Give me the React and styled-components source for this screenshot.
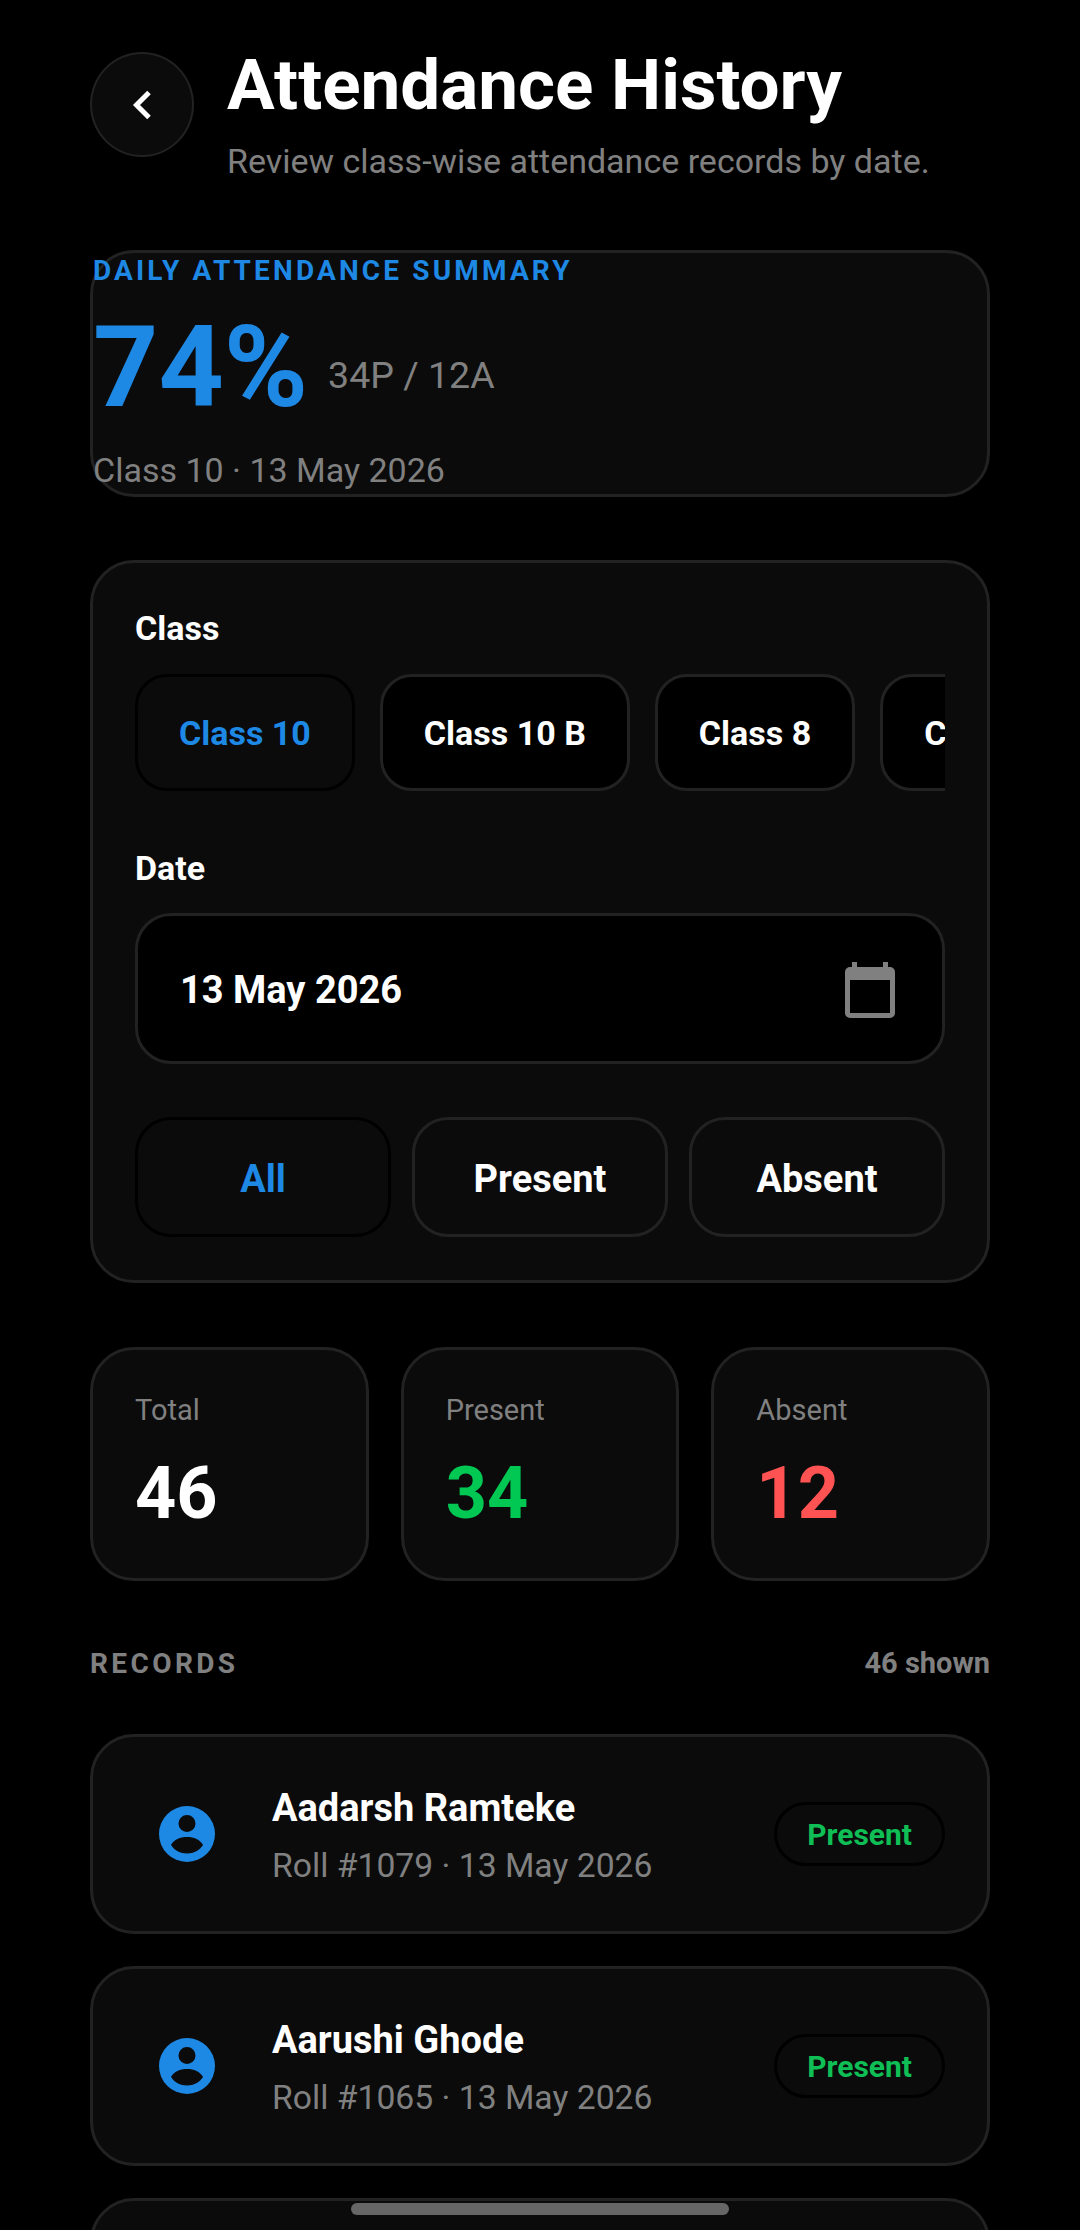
import styled, { createGlobalStyle } from 'styled-components';

const BLUE = '#1e88e5';
const GREY = '#808080';
const BORDER = '#222222';
const CARD = '#0b0b0b';

const records = [
  { name: 'Aadarsh Ramteke', roll: 1079 },
  { name: 'Aarushi Ghode', roll: 1065 },
];

const GlobalStyle = createGlobalStyle`
  html, body {
    margin: 0;
    height: 2230px;
    overflow: hidden;
    background: #000;
    font-family: Roboto, "Noto Sans", sans-serif;
    color: #fff;
  }
  * { box-sizing: border-box; }
`;

const Page = styled.div`
  position: relative;
  width: 1080px;
  height: 2230px;
  overflow: hidden;
  padding: 44px 90px 0;
`;

const Header = styled.header`
  display: flex;
  gap: 33px;
  height: 206px;
`;

const BackButton = styled.button`
  width: 104px;
  height: 105px;
  margin-top: 8px;
  padding: 0;
  border-radius: 50%;
  background: ${CARD};
  border: 2px solid ${BORDER};
  display: flex;
  align-items: center;
  justify-content: center;
`;

const HeaderText = styled.div`
  display: flex;
  flex-direction: column;
`;

const Title = styled.h1`
  margin: 0;
  font-size: 71px;
  line-height: 81px;
  font-weight: 700;
`;

const Subtitle = styled.p`
  margin: 15px 0 0;
  font-size: 34px;
  line-height: 42px;
  color: ${GREY};
`;

const Card = styled.section`
  background: ${CARD};
  border: 3px solid ${BORDER};
  border-radius: 44px;
`;

const SummaryCard = styled(Card)`
  height: 247px;
  display: flex;
  flex-direction: column;
`;

const SummaryLabel = styled.div`
  font-size: 28px;
  line-height: 35px;
  font-weight: 700;
  letter-spacing: 3.15px;
  color: ${BLUE};
`;

const SummaryRow = styled.div`
  display: flex;
  align-items: center;
  gap: 20px;
  margin-top: 19px;
`;

const Percent = styled.div`
  font-size: 114px;
  line-height: 120px;
  font-weight: 700;
  color: ${BLUE};
`;

const Counts = styled.div`
  margin-top: 16px;
  font-size: 37.5px;
  color: ${GREY};
`;

const SummaryMeta = styled.div`
  margin-top: 23px;
  font-size: 34px;
  line-height: 40px;
  color: ${GREY};
`;

const FilterCard = styled(Card)`
  margin-top: 63px;
  height: 723px;
  padding: 44px 42px 0;
`;

const FieldLabel = styled.div`
  font-size: 34px;
  line-height: 42px;
  font-weight: 700;
`;

const ChipRow = styled.div`
  display: flex;
  gap: 25px;
  margin-top: 25px;
  overflow: hidden;
`;

const Chip = styled.div`
  flex: none;
  height: 117px;
  padding: 0 41px;
  display: flex;
  align-items: center;
  border-radius: 32px;
  font-size: 34px;
  font-weight: 700;
  background: ${(p) => (p.$active ? CARD : '#000')};
  border: 3px solid ${(p) => (p.$active ? '#000' : BORDER)};
  color: ${(p) => (p.$active ? BLUE : '#fff')};
`;

const DateSection = styled.div`
  margin-top: 56px;
`;

const DateField = styled.div`
  margin-top: 24px;
  height: 151px;
  padding: 2px 47px 0 42px;
  display: flex;
  align-items: center;
  justify-content: space-between;
  background: #000;
  border: 3px solid ${BORDER};
  border-radius: 36px;
  font-size: 38px;
  font-weight: 700;
`;

const FilterRow = styled.div`
  display: grid;
  grid-template-columns: repeat(3, 1fr);
  gap: 21px;
  margin-top: 53px;
`;

const FilterButton = styled.div`
  height: 120px;
  padding-top: 3px;
  display: flex;
  align-items: center;
  justify-content: center;
  border-radius: 36px;
  font-size: 38px;
  font-weight: 700;
  background: ${CARD};
  border: 3px solid ${(p) => (p.$active ? '#000' : BORDER)};
  color: ${(p) => (p.$active ? BLUE : '#fff')};
`;

const StatRow = styled.div`
  display: grid;
  grid-template-columns: repeat(3, 1fr);
  gap: 32px;
  margin-top: 64px;
`;

const StatCard = styled(Card)`
  height: 234px;
  padding: 42px 42px 0;
`;

const StatLabel = styled.div`
  font-size: 29px;
  line-height: 36px;
  color: ${GREY};
`;

const StatValue = styled.div`
  margin-top: 26px;
  font-size: 72px;
  line-height: 80px;
  font-weight: 700;
  color: ${(p) => p.$color};
`;

const SectionHeader = styled.div`
  display: flex;
  align-items: center;
  justify-content: space-between;
  margin-top: 64px;
  height: 36px;
  color: ${GREY};
  font-weight: 700;
`;

const SectionTitle = styled.div`
  font-size: 28px;
  letter-spacing: 3.4px;
`;

const SectionCount = styled.div`
  font-size: 29px;
`;

const RecordList = styled.div`
  display: flex;
  flex-direction: column;
  gap: 32px;
  margin-top: 53px;
`;

const RecordCard = styled(Card)`
  flex: none;
  height: 200px;
  padding: 0 42px 0 66px;
  display: flex;
  align-items: center;
`;

const RecordText = styled.div`
  flex: 1;
  margin-left: 57px;
  padding-top: 3px;
`;

const RecordName = styled.div`
  font-size: 38px;
  line-height: 46px;
  font-weight: 700;
`;

const RecordMeta = styled.div`
  margin-top: 14px;
  font-size: 33.7px;
  line-height: 42px;
  color: ${GREY};
`;

const Badge = styled.div`
  height: 64px;
  padding: 0 30px;
  display: flex;
  align-items: center;
  border-radius: 32px;
  border: 3px solid #000;
  font-size: 30px;
  font-weight: 700;
  color: #0fbf55;
`;

const HomeIndicator = styled.div`
  position: absolute;
  left: 351px;
  top: 2203px;
  width: 378px;
  height: 12px;
  border-radius: 6px;
  background: #666666;
`;

function ChevronLeft() {
  return (
    <svg width="24" height="32" viewBox="0 0 24 32">
      <path d="M19 3.500 L6.500 16 L19 28.500" fill="none" stroke="#fff" strokeWidth="5" />
    </svg>
  );
}

function CalendarIcon() {
  return (
    <svg width="50" height="56" viewBox="0 0 50 56" fill={GREY}>
      <path
        fillRule="evenodd"
        d="M7 0h5v5h26V0h5v5h2a5 5 0 0 1 5 5v41a5 5 0 0 1-5 5H5a5 5 0 0 1-5-5V10a5 5 0 0 1 5-5h2zM5 18v33h40V18z"
      />
    </svg>
  );
}

function PersonIcon() {
  return (
    <svg width="56" height="56" viewBox="0 0 56 56">
      <path
        fill={BLUE}
        fillRule="evenodd"
        d="M28 0a28 28 0 1 1 0 56a28 28 0 1 1 0-56zM28 9a8.500 8.500 0 1 0 0 17a8.500 8.500 0 1 0 0-17zM28 31c-7 0-13 2.500-16 8c3 5 9.500 8.500 16 8.500s13-3.500 16-8.500c-3-5.500-9-8-16-8z"
      />
    </svg>
  );
}

export default function App() {
  return (
    <Page>
      <GlobalStyle />
      <Header>
        <BackButton>
          <ChevronLeft />
        </BackButton>
        <HeaderText>
          <Title>Attendance History</Title>
          <Subtitle>Review class-wise attendance records by date.</Subtitle>
        </HeaderText>
      </Header>

      <SummaryCard>
        <SummaryLabel>DAILY ATTENDANCE SUMMARY</SummaryLabel>
        <SummaryRow>
          <Percent>74%</Percent>
          <Counts>34P / 12A</Counts>
        </SummaryRow>
        <SummaryMeta>Class 10 · 13 May 2026</SummaryMeta>
      </SummaryCard>

      <FilterCard>
        <FieldLabel>Class</FieldLabel>
        <ChipRow>
          <Chip $active>Class 10</Chip>
          <Chip>Class 10 B</Chip>
          <Chip>Class 8</Chip>
          <Chip>Class 9</Chip>
        </ChipRow>
        <DateSection>
          <FieldLabel>Date</FieldLabel>
          <DateField>
            13 May 2026
            <CalendarIcon />
          </DateField>
        </DateSection>
        <FilterRow>
          <FilterButton $active>All</FilterButton>
          <FilterButton>Present</FilterButton>
          <FilterButton>Absent</FilterButton>
        </FilterRow>
      </FilterCard>

      <StatRow>
        <StatCard>
          <StatLabel>Total</StatLabel>
          <StatValue $color="#fff">46</StatValue>
        </StatCard>
        <StatCard>
          <StatLabel>Present</StatLabel>
          <StatValue $color="#00c853">34</StatValue>
        </StatCard>
        <StatCard>
          <StatLabel>Absent</StatLabel>
          <StatValue $color="#ff5252">12</StatValue>
        </StatCard>
      </StatRow>

      <SectionHeader>
        <SectionTitle>RECORDS</SectionTitle>
        <SectionCount>46 shown</SectionCount>
      </SectionHeader>

      <RecordList>
        {records.map((r) => (
          <RecordCard key={r.roll}>
            <PersonIcon />
            <RecordText>
              <RecordName>{r.name}</RecordName>
              <RecordMeta>Roll #{r.roll} · 13 May 2026</RecordMeta>
            </RecordText>
            <Badge>Present</Badge>
          </RecordCard>
        ))}
        <RecordCard />
      </RecordList>

      <HomeIndicator />
    </Page>
  );
}
